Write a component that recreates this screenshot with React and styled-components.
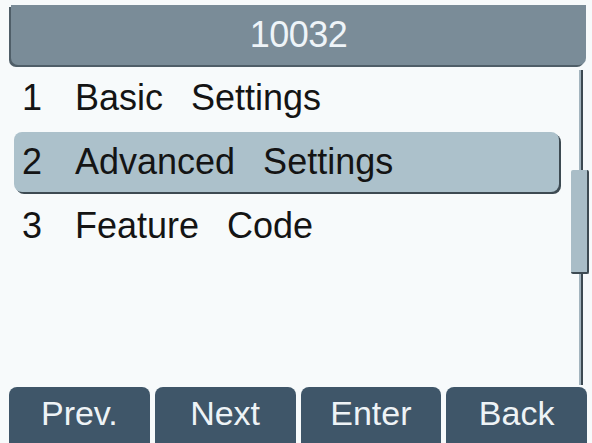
import styled, { createGlobalStyle } from "styled-components";

const GlobalStyle = createGlobalStyle`
  html, body {
    margin: 0;
    padding: 0;
    background: #f7fafb;
  }
  body {
    font-family: "Liberation Sans", Arial, sans-serif;
  }
`;

const items = [
  { num: "1", label: "Basic Settings" },
  { num: "2", label: "Advanced Settings" },
  { num: "3", label: "Feature Code" },
];

const keys = ["Prev.", "Next", "Enter", "Back"];

const App = () => {
  const selected = 1;

  return (
    <>
      <GlobalStyle />
      <Screen>
        <TitleBar>10032</TitleBar>
        <Body>
          <MenuList>
            {items.map((item, i) => (
              <MenuRow key={item.num} $active={i === selected}>
                <RowNum>{item.num}</RowNum>
                <RowLabel>{item.label}</RowLabel>
              </MenuRow>
            ))}
          </MenuList>
          <ScrollBar>
            <Track $grow={100} />
            <Thumb />
            <Track $grow={111} />
          </ScrollBar>
        </Body>
        <SoftKeys>
          {keys.map((k) => (
            <SoftKey key={k}>{k}</SoftKey>
          ))}
        </SoftKeys>
      </Screen>
    </>
  );
};

export default App;

const Screen = styled.div`
  width: 592px;
  height: 443px;
  display: flex;
  flex-direction: column;
  overflow: hidden;
  background: #f7fafb;
`;

const TitleBar = styled.div`
  margin: 5px 6px 0 11px;
  height: 60px;
  display: flex;
  align-items: center;
  justify-content: center;
  background: #7a8c98;
  color: #eef4f8;
  font-size: 36px;
  letter-spacing: -0.5px;
  border-bottom-left-radius: 7px;
  border-bottom-right-radius: 7px;
  box-shadow: -2px 2px 0 #4f5e68;
`;

const Body = styled.div`
  flex: 1;
  display: flex;
  padding-top: 1px;
`;

const MenuList = styled.div`
  flex: 1;
  display: flex;
  flex-direction: column;
  padding: 0 0 0 14px;
`;

const MenuRow = styled.div`
  height: 60px;
  margin: 2px 0;
  display: flex;
  align-items: center;
  padding-left: 8px;
  color: #141414;
  font-size: 36px;
  border-radius: 8px;
  background: ${(p) => (p.$active ? "#acc1cb" : "transparent")};
  box-shadow: ${(p) => (p.$active ? "2px 2px 0 #3d4a52" : "none")};
`;

const RowNum = styled.span`
  width: 53px;
  flex: none;
`;

const RowLabel = styled.span`
  word-spacing: 18px;
  white-space: nowrap;
`;

const ScrollBar = styled.div`
  width: 18px;
  margin: 4px 3px 0 12px;
  display: flex;
  flex-direction: column;
  align-items: center;
`;

const Track = styled.div`
  flex: ${(p) => p.$grow};
  width: 4px;
  margin-left: 2px;
  background: #a3b4be;
  border-right: 2px solid #3d4a52;
  box-sizing: border-box;
`;

const Thumb = styled.div`
  height: 104px;
  width: 18px;
  box-sizing: border-box;
  background: #a9bdc7;
  border-right: 2px solid #3d4a52;
  border-bottom: 2px solid #3d4a52;
  border-radius: 2px;
`;

const SoftKeys = styled.div`
  display: grid;
  grid-template-columns: repeat(4, 1fr);
  gap: 5px;
  margin: 2px 5px 0 9px;
  height: 56px;
`;

const SoftKey = styled.div`
  display: flex;
  align-items: center;
  justify-content: center;
  padding-bottom: 4px;
  background: #3f5669;
  color: #eef3f6;
  font-size: 34px;
  border-radius: 8px 8px 0 0;
`;
